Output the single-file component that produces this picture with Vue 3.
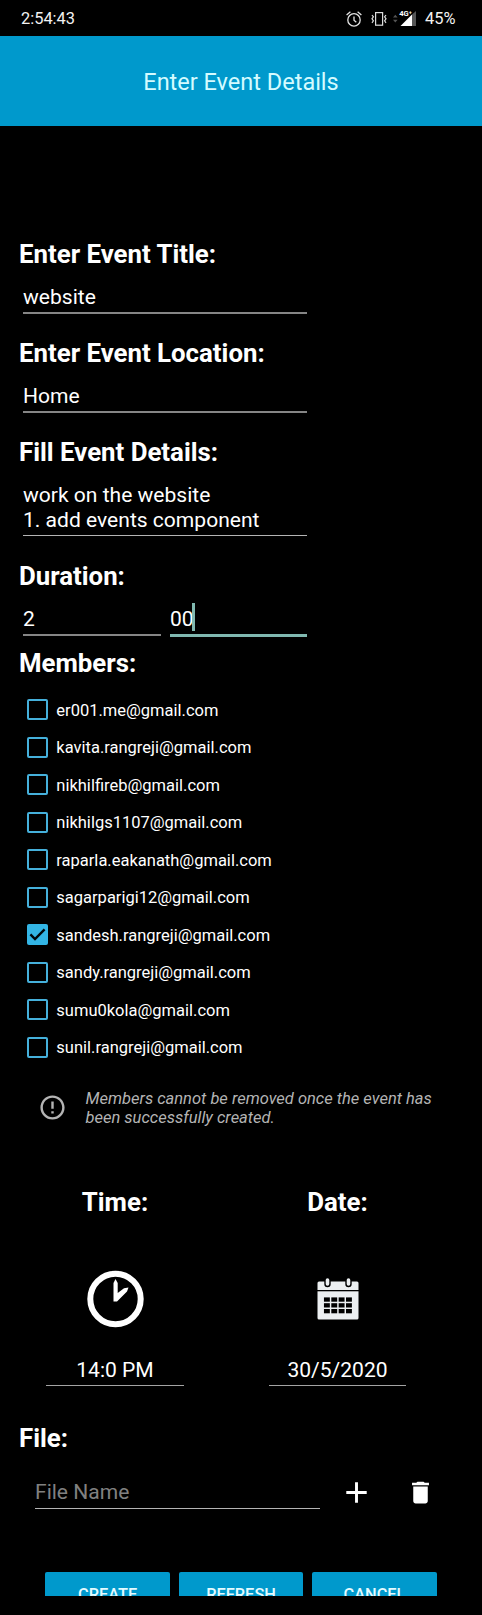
<script setup>
const members = [
  { email: 'er001.me@gmail.com', checked: false },
  { email: 'kavita.rangreji@gmail.com', checked: false },
  { email: 'nikhilfireb@gmail.com', checked: false },
  { email: 'nikhilgs1107@gmail.com', checked: false },
  { email: 'raparla.eakanath@gmail.com', checked: false },
  { email: 'sagarparigi12@gmail.com', checked: false },
  { email: 'sandesh.rangreji@gmail.com', checked: true },
  { email: 'sandy.rangreji@gmail.com', checked: false },
  { email: 'sumu0kola@gmail.com', checked: false },
  { email: 'sunil.rangreji@gmail.com', checked: false },
]
const actions = ['CREATE', 'REFRESH', 'CANCEL']
</script>

<template>
  <div class="screen">
    <div class="status">
      <span class="clock-text">2:54:43</span>
      <svg class="alarm" width="16" height="16" viewBox="0 0 16 16" fill="none" stroke="#e4e4e4" stroke-width="1.3">
        <circle cx="8" cy="8.9" r="6.2" />
        <path d="M8 5.4V9.2L10.3 11.2M0.6 3.9L4.4 0.8M15.4 3.9L11.6 0.8" />
      </svg>
      <svg class="vibrate" width="16" height="16" viewBox="0 0 16 16" fill="none" stroke="#dcdcdc" stroke-width="1.2">
        <rect x="4.6" y="1.6" width="7" height="12.6" />
        <path d="M1 4L2.4 5.8L1 7.8L2.4 9.8L1 11.8M15 4L13.6 5.8L15 7.8L13.6 9.8L15 11.8" />
      </svg>
      <svg class="signal" width="24" height="18" viewBox="0 0 24 18">
        <path d="M0 7.5L2.3 4.8L4.6 7.5ZM0 9.8L2.3 12.5L4.6 9.8Z" fill="#555" />
        <path d="M7.5 16L19 4.5V16Z" fill="#fff" />
        <path d="M19 4.5L23 1V16H19Z" fill="#555" />
        <text x="6.2" y="6.4" font-size="7.6" font-weight="700" fill="#fff" stroke="#000" stroke-width="1.2" paint-order="stroke">4G⁺</text>
      </svg>
      <span class="battery">45%</span>
    </div>
    <header class="header">Enter Event Details</header>

    <main class="form">
      <section class="group title-group">
        <h2>Enter Event Title:</h2>
        <div class="field">website</div>
      </section>
      <section class="group">
        <h2>Enter Event Location:</h2>
        <div class="field">Home</div>
      </section>
      <section class="group">
        <h2>Fill Event Details:</h2>
        <div class="field multi">work on the website<br />1. add events component</div>
      </section>
      <section class="group duration">
        <h2>Duration:</h2>
        <div class="pair">
          <div class="field">2</div>
          <div class="field focused">00<i class="caret"></i></div>
        </div>
      </section>

      <section class="members">
        <h2>Members:</h2>
        <ul>
          <li v-for="m in members" :key="m.email">
            <span class="box" :class="{ on: m.checked }">
              <svg v-if="m.checked" width="21" height="21" viewBox="0 0 21 21">
                <path d="M3.4 10.4L8 15L17.6 5.4" fill="none" stroke="#00080c" stroke-width="2.4" />
              </svg>
            </span>
            <span class="email">{{ m.email }}</span>
          </li>
        </ul>
      </section>

      <div class="note">
        <svg width="29" height="29" viewBox="0 0 24 24" fill="#b4b4b4">
          <path d="M11 15h2v2h-2zm0-8h2v6h-2zm1-5C6.5 2 2 6.5 2 12s4.5 10 10 10 10-4.5 10-10S17.5 2 12 2zm0 18c-4.4 0-8-3.6-8-8s3.6-8 8-8 8 3.6 8 8-3.6 8-8 8z" />
        </svg>
        <p>Members cannot be removed once the event has<br />been successfully created.</p>
      </div>

      <div class="when">
        <section>
          <h2>Time:</h2>
          <div class="picture">
            <svg width="58" height="58" viewBox="0 0 58 58">
              <circle cx="29.5" cy="29" r="25.2" fill="none" stroke="#fff" stroke-width="6" />
              <path d="M27.5 31.5V13L29.5 9L31.7 13V23L38 18.3L42.5 17.5L41 21.5L31 31.5Z" fill="#fff" />
            </svg>
          </div>
          <div class="field centered">14:0 PM</div>
        </section>
        <section>
          <h2>Date:</h2>
          <div class="picture">
            <svg width="42" height="42" viewBox="0 0 42 42">
              <rect x="0.5" y="3.5" width="41" height="38" rx="1.5" fill="#eceff1" />
              <rect x="0" y="12" width="42" height="1.3" fill="#000" />
              <g fill="#eceff1" stroke="#000" stroke-width="1.4">
                <rect x="8" y="-0.5" width="5" height="9" rx="2.5" />
                <rect x="29" y="-0.5" width="5" height="9" rx="2.5" />
              </g>
              <g fill="#000">
                <template v-for="r in 3" :key="r">
                  <rect v-for="c in 4" :key="c" :x="c * 7.35 - 0.4" :y="13.6 + r * 5.8" width="5.9" height="4.3" />
                </template>
              </g>
            </svg>
          </div>
          <div class="field centered">30/5/2020</div>
        </section>
      </div>

      <section class="file">
        <h2>File:</h2>
        <div class="file-row">
          <div class="field placeholder">File Name</div>
          <svg class="add" width="35" height="35" viewBox="0 0 24 24" fill="#fff">
            <path d="M19 13h-6v6h-2v-6H5v-2h6V5h2v6h6v2z" />
          </svg>
          <svg class="trash" width="29" height="29" viewBox="0 0 24 24" fill="#fff">
            <path d="M6 19c0 1.1.9 2 2 2h8c1.1 0 2-.9 2-2V7H6v12zM19 4h-3.5l-1-1h-5l-1 1H5v2h14V4z" />
          </svg>
        </div>
      </section>

      <div class="actions">
        <div v-for="a in actions" :key="a" class="btn">{{ a }}</div>
      </div>
    </main>
  </div>
</template>

<style>
body {
  background: #000;
}
</style>

<style scoped>
.screen {
  width: 482px;
  height: 1615px;
  overflow: hidden;
  background: #000;
  color: #fff;
  font-family: Roboto, sans-serif;
  box-sizing: border-box;
}
.screen * {
  box-sizing: border-box;
}
svg {
  display: block;
  flex: none;
}
.status {
  height: 36px;
  display: flex;
  align-items: center;
  padding: 1px 0 0 21px;
  font-size: 16.4px;
  line-height: 36px;
  color: #f2f2f2;
}
.alarm {
  margin-left: auto;
}
.vibrate {
  margin-left: 9px;
}
.signal {
  margin-left: 6px;
}
.battery {
  width: 57px;
  margin-left: 8px;
}
.header {
  height: 90px;
  padding-top: 2px;
  background: #0099cc;
  color: #d4fbff;
  font-size: 23.5px;
  line-height: 88px;
  text-align: center;
}
.form {
  padding-top: 113px;
}
h2 {
  margin: 0 0 0 19px;
  font-size: 25.8px;
  font-weight: 700;
  line-height: 30px;
  white-space: nowrap;
}
.group {
  height: 99px;
}
.field {
  width: 284px;
  margin: 15px 0 0 23px;
  padding-bottom: 3px;
  border-bottom: 2px solid #858585;
  font-size: 21.05px;
  line-height: 25px;
  white-space: nowrap;
}
.field.multi {
  border-bottom: 1px solid #b4b4b4;
}
.group:nth-of-type(3) {
  height: 124px;
}
.duration {
  height: 87px;
}
.pair {
  display: flex;
  gap: 9px;
  margin: 15px 0 0 23px;
}
.pair .field {
  width: 138px;
  height: 30px;
  margin: 0;
}
.pair .focused {
  width: 137px;
  height: 31px;
  display: flex;
  border-bottom: 3px solid #80b8b0;
}
.caret {
  width: 3px;
  height: 28px;
  margin: -3px 0 0 -1.5px;
  background: #80b8b0;
}
ul {
  margin: 13px 0 0;
  padding: 0 0 0 27px;
  list-style: none;
}
li {
  height: 37.5px;
  display: flex;
  align-items: center;
  gap: 8.3px;
  font-size: 16.5px;
}
.email {
  padding-top: 1px;
}
.box {
  width: 21px;
  height: 21px;
  border: 2px solid #45b0db;
  border-radius: 2px;
}
.box.on {
  border: 0;
  background: #33b5e5;
}
.note {
  height: 39px;
  margin-top: 22px;
  padding-left: 37.5px;
  display: flex;
  align-items: center;
  gap: 19px;
  color: #b4b4b4;
  font-size: 16.5px;
  font-style: italic;
  line-height: 19px;
  white-space: nowrap;
}
.note p {
  margin: 0;
}
.when {
  display: flex;
  gap: 85px;
  margin-top: 60px;
  padding-left: 46px;
}
.when section {
  width: 138px;
}
.when section + section {
  width: 137px;
}
.when h2 {
  margin: 0;
  text-align: center;
}
.picture {
  height: 140px;
  padding-bottom: 17px;
  padding-top: 41px;
  display: flex;
  align-items: center;
  justify-content: center;
}
.field.centered {
  width: 100%;
  margin: 0;
  border-bottom: 1px solid #a4a4a4;
  text-align: center;
}
.file {
  margin-top: 37px;
}
.file-row {
  height: 60px;
  display: flex;
  align-items: flex-start;
  padding-top: 22px;
}
.file-row .field {
  width: 285px;
  margin: 4px 0 0 35px;
  padding-bottom: 4px;
  border-bottom: 1px solid #b4b4b4;
}
.placeholder {
  color: #808080;
}
.add {
  margin: 0 0 0 19px;
}
.trash {
  margin: 3px 0 0 32px;
}
.actions {
  display: flex;
  gap: 8.8px;
  height: 24px;
  margin-top: 59px;
  padding-left: 45.4px;
  overflow: hidden;
}
.btn {
  width: 124.6px;
  height: 45px;
  border-radius: 2px;
  background: #0099cc;
  color: #e4fbff;
  font-size: 16.4px;
  font-weight: 500;
  line-height: 45px;
  text-align: center;
}
</style>
